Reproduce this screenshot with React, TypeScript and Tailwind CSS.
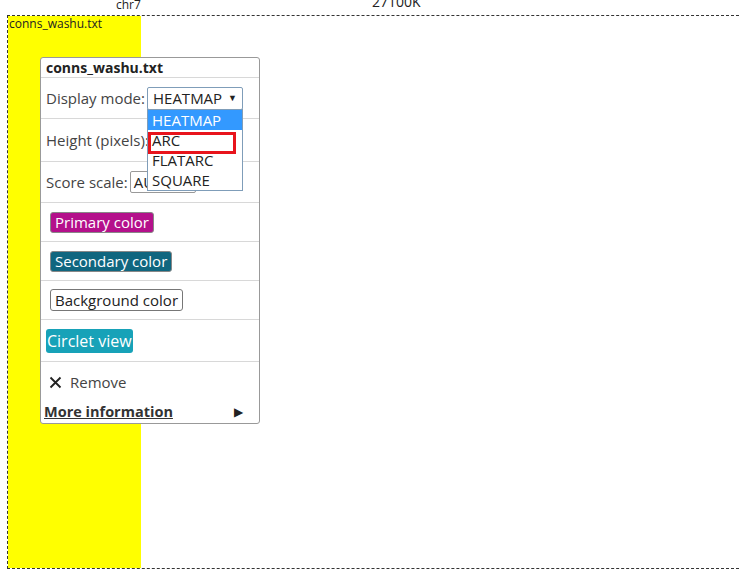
import React from "react";

const Divider = () => <div className="h-px bg-[#d8d8d8]" />;

const TrackMenu = () => {
  return (
    <div className="absolute left-[40px] top-[57px] w-[220px] h-[367px] bg-white border border-[#999] rounded-[3px] text-[15px] text-[#444]">
      <div className="px-[5px] h-[19px] leading-[20px] text-[14px] font-bold text-[#222]">conns_washu.txt</div>
      <Divider />
      {/* display mode */}
      <div className="h-[40px] flex items-center px-[5px]">
        <span>Display mode:</span>
        <div className="ml-[2px] w-[96px] h-[23px] border border-[#7f9db9] rounded-[2px] flex items-center px-[5px] text-[#222]">
          <span>HEATMAP</span>
          <span className="ml-auto text-[9px]">▼</span>
        </div>
      </div>
      <Divider />
      <div className="h-[42px] flex items-center px-[5px]">
        <span>Height (pixels):</span>
      </div>
      <Divider />
      <div className="h-[40px] flex items-center px-[5px]">
        <span>Score scale:</span>
        <div className="ml-[2px] w-[66px] h-[22px] border border-[#999] rounded-[2px] flex items-center px-[3px] text-[#222]">
          AUTO
        </div>
      </div>
      <Divider />
      <div className="h-[38px] flex items-center px-[9px]">
        <span className="px-[4px] h-[21px] leading-[19px] rounded-[3px] border border-[#888] bg-[#b4108b] text-white">Primary color</span>
      </div>
      <Divider />
      <div className="h-[38px] flex items-center px-[9px]">
        <span className="px-[4px] h-[21px] leading-[19px] rounded-[3px] border border-[#888] bg-[#10667f] text-white">Secondary color</span>
      </div>
      <Divider />
      <div className="h-[38px] flex items-center px-[9px]">
        <span className="px-[4px] h-[22px] leading-[20px] rounded-[3px] border border-[#777] bg-white text-[#222]">Background color</span>
      </div>
      <Divider />
      <div className="h-[41px] flex items-center px-[5px]">
        <span className="px-[1px] h-[24px] leading-[24px] rounded-[3px] bg-[#17a2b8] text-white text-[16px]">Circlet view</span>
      </div>
      <Divider />
      <div className="h-[40px] flex items-center px-[8px] gap-[8px]">
        <svg width="13" height="13" viewBox="0 0 13 13">
          <path d="M1.5 1.5 L11.5 11.5 M11.5 1.5 L1.5 11.5" stroke="#222" strokeWidth="1.8" />
        </svg>
        <span>Remove</span>
      </div>
      <div className="h-[20px] flex items-center px-[3px]">
        <span className="font-bold underline text-[14.5px] text-[#333]">More information</span>
        <span className="ml-auto mr-[13px] text-[12px] text-[#222]">▶</span>
      </div>

      {/* open dropdown list */}
      <div className="absolute left-[106px] top-[51px] w-[96px] h-[82px] bg-white border border-[#7f9db9] text-[#222]">
        <div className="h-[20px] leading-[20px] px-[4px] bg-[#3399ff] text-white">HEATMAP</div>
        <div className="relative h-[20px] leading-[20px] px-[4px]">
          ARC
          <div className="absolute left-0 top-[2px] w-[88px] h-[22px] border-[3px] border-[#e8141c]" />
        </div>
        <div className="h-[20px] leading-[20px] px-[4px]">FLATARC</div>
        <div className="h-[20px] leading-[20px] px-[4px]">SQUARE</div>
      </div>
    </div>
  );
};

export default function App() {
  return (
    <div className="relative w-[739px] h-[573px] bg-white overflow-hidden font-['Open_Sans',sans-serif]">
      {/* ruler */}
      <div className="relative h-[15px]">
        <span className="absolute left-[116px] top-[-4px] text-[12px] text-[#222]">chr7</span>
        <span className="absolute left-[372px] top-[-9px] text-[14px] text-[#222]">27100K</span>
      </div>
      {/* track */}
      <div className="ml-[7px] h-[554px] border-l border-t border-b border-dashed border-[#333] flex">
        <div className="w-[133px] h-full bg-[#ffff00] text-[12px] leading-[14px] pt-[1px] pl-[1px] text-[#222]">
          conns_washu.txt
        </div>
      </div>
      <TrackMenu />
    </div>
  );
}
